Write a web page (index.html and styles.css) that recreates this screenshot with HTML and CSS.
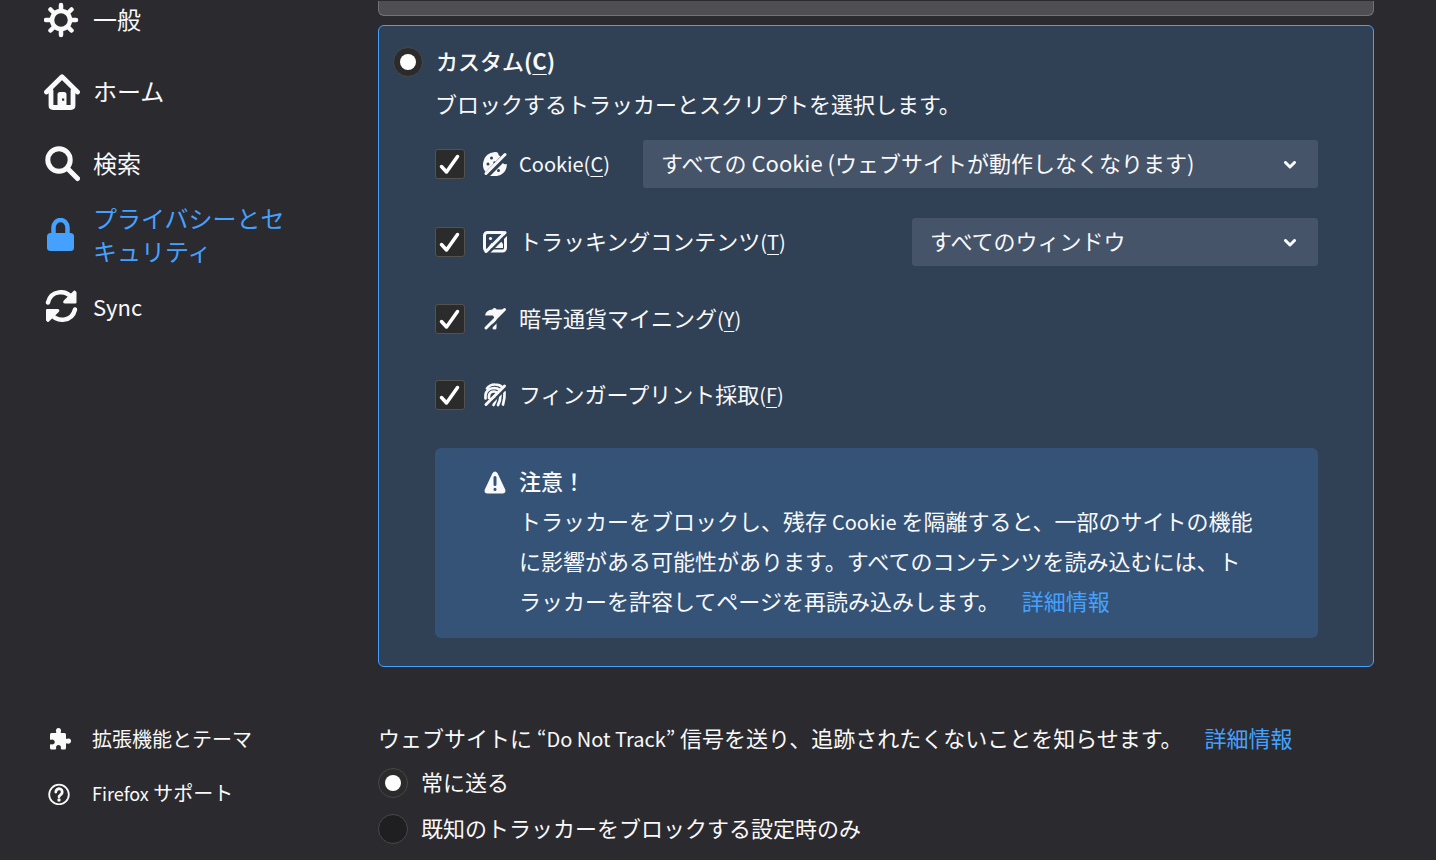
FILE: index.html
```html
<!DOCTYPE html>
<html lang="ja">
<head>
    <meta charset="UTF-8">
    <meta name="viewport" content="width=device-width, initial-scale=1.0">
    <title>設定</title>
    <link rel="stylesheet" href="styles.css">
</head>
<body>
  <div class="page">
    <aside class="sidebar">
      <nav class="categories">
        <a class="category" href="#general">
          <svg class="category-icon" viewBox="0 0 36 36" fill="none" stroke="currentColor" stroke-width="4.500" stroke-linecap="round">
            <circle cx="17" cy="18" r="9"/>
            <path d="M17 3v5M17 28v5M2 18h5M27 18h5M6.500 7.500l3.500 3.500M24 25l3.500 3.500M27.500 7.500l-3.500 3.500M10 25l-3.500 3.500"/>
          </svg>
          <span>一般</span>
        </a>
        <a class="category" href="#home">
          <svg class="category-icon" viewBox="0 0 36 36" fill="none" stroke="currentColor" stroke-width="4.800" stroke-linecap="round" stroke-linejoin="round">
            <path d="M2.500 18L18 2.800L33.500 18"/>
            <path d="M7 16.500v15q0 2 2 2h18q2 0 2-2v-15"/>
            <path d="M13.500 33V20.500q0-2.500 2.500-2.500h4q2.500 0 2.500 2.500V33z" fill="currentColor" stroke="none"/>
            <rect class="door-knob" x="18" y="24.500" width="2.200" height="2.200" stroke="none"/>
          </svg>
          <span>ホーム</span>
        </a>
        <a class="category" href="#search">
          <svg class="category-icon" viewBox="0 0 36 36" fill="none" stroke="currentColor" stroke-width="5" stroke-linecap="round">
            <circle cx="15" cy="14" r="11.200"/>
            <path d="M23.500 22.500L33.500 32.500"/>
          </svg>
          <span>検索</span>
        </a>
        <a class="category selected" href="#privacy">
          <svg class="category-icon" viewBox="0 0 36 36">
            <rect x="3" y="15" width="27" height="18" rx="3.500" fill="currentColor"/>
            <path d="M9.500 16v-6.500a7 7.500 0 0 1 14 0V16" fill="none" stroke="currentColor" stroke-width="4.500"/>
          </svg>
          <span>プライバシーとセキュリティ</span>
        </a>
        <a class="category" href="#sync">
          <svg class="category-icon" viewBox="0 0 36 36" fill="none" stroke="currentColor" stroke-width="4.500" stroke-linecap="round" stroke-linejoin="round">
            <path d="M4 12.500C7 0 22-.5 28 8"/>
            <path d="M31 19.500C28 32 13 32.500 7 24"/>
            <path d="M31.500 2.500v10h-10.500q-1.500 0-.5-1.200l10-9.800z" fill="currentColor" stroke-width="2"/>
            <path d="M3 30v-10h10.500q1.500 0 .5 1.200l-10 9.800z" fill="currentColor" stroke-width="2"/>
          </svg>
          <span class="sync-label">Sync</span>
        </a>
      </nav>

      <nav class="side-links">
        <a class="side-link" href="#addons">
          <svg class="side-icon" viewBox="0 0 24 24" fill="currentColor">
            <path d="M2 7.500q0-1.500 1.500-1.500h4q1.200 0 .7-1.300A2.600 2.600 0 1 1 12.800 4.700Q12.300 6 13.500 6h3q1.500 0 1.500 1.500v3.500q0 1.300 1.300.8a2.600 2.600 0 1 1 0 4.600q-1.300-.5-1.300.8v3.800q0 1.500-1.500 1.500h-2.700q-1.500 0-.9-1.400a2.500 2.500 0 1 0-4.800 0q.6 1.400-.9 1.400H3.500Q2 22.500 2 21v-3q0-1.200 1.300-.7a2.500 2.500 0 1 0 0-4.600Q2 13.200 2 12z"/>
          </svg>
          <span>拡張機能とテーマ</span>
        </a>
        <a class="side-link" href="#support">
          <svg class="side-icon" viewBox="0 0 24 24" fill="none" stroke="currentColor" stroke-linecap="round" stroke-linejoin="round">
            <circle cx="11" cy="13.500" r="9.800" stroke-width="1.800"/>
            <path d="M7.800 11a3.200 3.200 0 1 1 5 2.600q-1.800 1.200-1.800 2.200" stroke-width="2.800"/>
            <circle cx="11" cy="19" r="1.700" fill="currentColor" stroke="none"/>
          </svg>
          <span><span class="latin-small">Firefox</span> サポート</span>
        </a>
      </nav>
    </aside>

    <main class="content">
      <div class="option-card strict"></div>

      <section class="option-card custom">
        <div class="radio-row">
          <input type="radio" class="radio" name="blocking" id="custom" checked>
          <label class="card-title" for="custom">カスタム<b>(<u>C</u>)</b></label>
        </div>

        <div class="card-body">
          <p class="description">ブロックするトラッカーとスクリプトを選択します。</p>

          <div class="rows">
            <div class="row">
              <span class="check">
                <input type="checkbox" id="cookies" checked>
                <svg viewBox="0 0 30 30"><path d="M6.500 17.500l5 5.500L22.500 7.500"/></svg>
              </span>
              <svg class="row-icon" viewBox="0 0 24 24">
                <path d="M12 0q2.500 0 3 1 0 2.500 2.500 3.500L2.500 20Q-1 16 .3 10Q2 1 12 0z" fill="currentColor"/>
                <path d="M7 24L20 11q1 2 4 1Q23.500 20 17.500 23Q12 25 7 24z" fill="currentColor"/>
                <circle class="hole" cx="8.500" cy="6" r="1.500"/>
                <circle class="hole" cx="5" cy="12" r="1.500"/>
                <circle class="hole" cx="11.500" cy="10.500" r="1.200"/>
                <circle class="hole" cx="15.500" cy="18.500" r="1.500"/>
                <path class="slash-gap" d="M24.500 3.800L4.500 23.800"/>
                <path class="slash" d="M22 2.500L3 21.500"/>
              </svg>
              <label class="row-label" for="cookies"><span class="latin">Cookie(<u>C</u>)</span></label>
              <div class="menu wide">
                <select aria-label="Cookie">
                  <option>すべての Cookie (ウェブサイトが動作しなくなります)</option>
                </select>
                <svg class="chevron" viewBox="0 0 12 8"><path d="M1.500 1.500L6 6l4.500-4.500"/></svg>
              </div>
            </div>

            <div class="row">
              <span class="check">
                <input type="checkbox" id="tracking" checked>
                <svg viewBox="0 0 30 30"><path d="M6.500 17.500l5 5.500L22.500 7.500"/></svg>
              </span>
              <svg class="row-icon" viewBox="0 0 24 24">
                <rect x="1.500" y="2.500" width="21" height="18.500" rx="3" fill="none" stroke="currentColor" stroke-width="3"/>
                <circle cx="7.500" cy="8.500" r="1.600" fill="currentColor"/>
                <path d="M5 18l3.500-5 2.500 2 5.500-5.500 3.500 4.500v4z" fill="currentColor"/>
                <path class="slash-gap" d="M24.500 3.800L4.500 23.800"/>
                <path class="slash" d="M22 2.500L3 21.500"/>
              </svg>
              <label class="row-label" for="tracking">トラッキングコンテンツ<span class="latin">(<u>T</u>)</span></label>
              <div class="menu narrow">
                <select aria-label="トラッキングコンテンツ">
                  <option>すべてのウィンドウ</option>
                </select>
                <svg class="chevron" viewBox="0 0 12 8"><path d="M1.500 1.500L6 6l4.500-4.500"/></svg>
              </div>
            </div>

            <div class="row short">
              <span class="check">
                <input type="checkbox" id="miners" checked>
                <svg viewBox="0 0 30 30"><path d="M6.500 17.500l5 5.500L22.500 7.500"/></svg>
              </span>
              <svg class="row-icon" viewBox="0 0 24 24">
                <path d="M2 8.500Q3 3 9.500 2.500 9.500 1 11.500 1t2 1.500l7 0L12 12 10 8.500H3q-1.200 0-1-1z" fill="currentColor"/>
                <path d="M9.500 16l4-4V21q0 1.500-2 1.500T9.500 21z" fill="currentColor"/>
                <path class="slash-gap" d="M24.500 3.800L4.500 23.800"/>
                <path class="slash" d="M21.500 2.500L3 21"/>
              </svg>
              <label class="row-label" for="miners">暗号通貨マイニング<span class="latin">(<u>Y</u>)</span></label>
            </div>

            <div class="row short">
              <span class="check">
                <input type="checkbox" id="fingerprint" checked>
                <svg viewBox="0 0 30 30"><path d="M6.500 17.500l5 5.500L22.500 7.500"/></svg>
              </span>
              <svg class="row-icon" viewBox="0 0 24 24">
                <g fill="none" stroke="currentColor" stroke-width="2.700" stroke-linecap="round">
                  <path d="M4 5.500Q7 1.300 12 1.500q5 0 7.500 3"/>
                  <path d="M2.500 15.500V12q1-6.500 8.500-7 3.500 0 6 2"/>
                  <path d="M6 15v-2q.5-4.500 5-4.500 2 0 3.500 1.500"/>
                  <path d="M21.500 9q.5 6-1.500 12.500"/>
                  <path d="M17.500 12q0 5.500-2.500 10"/>
                  <path d="M13 15q-.5 4-2.500 7"/>
                </g>
                <path class="slash-gap" d="M24.500 3.800L4.500 23.800"/>
                <path class="slash" d="M21.500 3L3 21.500"/>
              </svg>
              <label class="row-label" for="fingerprint">フィンガープリント採取<span class="latin">(<u>F</u>)</span></label>
            </div>
          </div>

          <div class="warning">
            <svg class="row-icon warning-icon" viewBox="0 0 24 24">
              <path d="M9.300 2.500q2.700-4 5.400 0L22.200 18.500q1 4-2.500 4H4.300q-3.500 0-2.500-4z" fill="currentColor"/>
              <path class="mark" d="M12 6.500v7M12 18.200v.2"/>
            </svg>
            <div class="warning-text">
              <strong>注意！</strong>
              <p>トラッカーをブロックし、残存 <span class="latin">Cookie</span> を隔離すると、一部のサイトの機能に影響がある可能性があります。すべてのコンテンツを読み込むには、トラッカーを許容してページを再読み込みします。<a class="learn-more" href="#learn">詳細情報</a></p>
            </div>
          </div>
        </div>
      </section>

      <section class="dnt">
        <p>ウェブサイトに <span class="latin">“Do Not Track”</span> 信号を送り、追跡されたくないことを知らせます。<a class="learn-more" href="#dnt">詳細情報</a></p>
        <div class="radio-row">
          <input type="radio" class="radio" name="dnt" id="dnt-always" checked>
          <label for="dnt-always">常に送る</label>
        </div>
        <div class="radio-row">
          <input type="radio" class="radio" name="dnt" id="dnt-default">
          <label for="dnt-default">既知のトラッカーをブロックする設定時のみ</label>
        </div>
      </section>
    </main>
  </div>
</body>
</html>
```

FILE: styles.css
```css
*{
    box-sizing: border-box;
}

body{
    margin: 0;
    background-color: #2b2a2e;
    color: #f9f9fa;
    font-family: "Noto Sans CJK JP", sans-serif;
    font-size: 22px;
    line-height: 33px;
}

p{
    margin: 0;
}

a{
    color: inherit;
    text-decoration: none;
}

u{
    text-underline-offset: 4px;
    text-decoration-thickness: 1px;
}

label,
.category span{
    padding-bottom: 4px;
}

/* latin letters run large next to kana */
.latin{
    font-size: 20px;
    line-height: 1;
}

.latin-small{
    font-size: 18px;
    line-height: 1;
}

.page{
    display: flex;
    min-height: 100vh;
}

/* sidebar */
.sidebar{
    display: flex;
    flex-direction: column;
    justify-content: space-between;
    flex: 0 0 312px;
    height: 100vh;
    padding: 0 16px 40px 44px;
}

.categories{
    margin-top: -16px;
    font-size: 24px;
}

.category{
    display: flex;
    align-items: center;
    gap: 13px;
    height: 72px;
}

.category-icon{
    flex: none;
    width: 36px;
    height: 36px;
}

.sync-label{
    font-size: 22px;
}

.selected,
.learn-more{
    color: #45a1ff;
}

.door-knob{
    fill: #2b2a2e;
}

.side-links{
    font-size: 20px;
}

.side-link{
    display: flex;
    align-items: center;
    gap: 20px;
    height: 54px;
    padding-left: 4px;
}

.side-link > span{
    padding-bottom: 2px;
}

.side-icon{
    flex: none;
    width: 24px;
    height: 24px;
}

/* main column */
.content{
    flex: 1;
    padding: 0 62px 16px 66px;
}

.option-card{
    border: 1px solid #737277;
    border-radius: 6px;
    background-color: #4f4e52;
}

.strict{
    height: 15px;
    margin: 1px 0 9px;
    border-top: none;
    border-radius: 0 0 6px 6px;
}

.custom{
    padding: 21px 55px 28px 14px;
    border-color: #45a1ff;
    background-color: #304156;
}

.radio-row{
    display: flex;
    align-items: center;
    gap: 13px;
    height: 30px;
}

.radio{
    flex: none;
    display: grid;
    place-content: center;
    appearance: none;
    width: 30px;
    height: 30px;
    margin: 0;
    border: 1px solid #48474a;
    border-radius: 50%;
    background-color: #1f1f21;
}

.radio:checked{
    background-color: #2b2b2b;
}

.radio:checked::before{
    content: "";
    width: 16px;
    height: 16px;
    border-radius: 50%;
    background-color: #fff;
}

.card-title{
    font-weight: 500;
}

.card-body{
    padding-left: 42px;
}

.description{
    margin: 10px 0 20px;
}

.rows{
    display: grid;
    gap: 30px;
}

.row{
    display: flex;
    align-items: center;
    height: 48px;
}

.short{
    height: 46px;
}

.check{
    position: relative;
    flex: none;
    width: 30px;
    height: 30px;
    margin-right: 18px;
}

.check input{
    display: block;
    appearance: none;
    width: 30px;
    height: 30px;
    margin: 0;
    border: 1px solid #54524f;
    border-radius: 3px;
    background-color: #2b2b2b;
}

.check svg{
    position: absolute;
    inset: 0;
    fill: none;
    stroke: #fff;
    stroke-width: 3.5;
    stroke-linecap: round;
    stroke-linejoin: round;
    pointer-events: none;
}

.row-icon{
    flex: none;
    width: 24px;
    height: 24px;
    margin-right: 12px;
}

.hole{
    fill: #304156;
}

.slash-gap{
    stroke: #304156;
    stroke-width: 2.5;
}

.slash{
    stroke: currentColor;
    stroke-width: 3;
    stroke-linecap: round;
}

.menu{
    position: relative;
    flex: 0 1 auto;
    height: 48px;
    margin-left: auto;
}

.wide{
    width: 675px;
}

.narrow{
    width: 406px;
}

.menu select{
    appearance: none;
    width: 100%;
    height: 100%;
    padding: 0 40px 4px 18px;
    border: none;
    border-radius: 3px;
    background-color: #455469;
    color: inherit;
    font: inherit;
}

.chevron{
    position: absolute;
    top: 21px;
    right: 22px;
    width: 12px;
    height: 8px;
    fill: none;
    stroke: currentColor;
    stroke-width: 3;
    stroke-linecap: round;
    stroke-linejoin: round;
    pointer-events: none;
}

.warning{
    display: flex;
    margin-top: 30px;
    padding: 12px 60px 18px 48px;
    border-radius: 6px;
    background-color: #345377;
    line-height: 40px;
}

.warning-icon{
    margin-top: 11px;
}

.warning-text strong{
    display: block;
    font-weight: 500;
}

.mark{
    stroke: #345377;
    stroke-width: 3;
    stroke-linecap: round;
}

.learn-more{
    display: inline-block;
    margin-left: 22px;
}

/* do not track */
.dnt{
    display: grid;
    gap: 16px;
    margin-top: 54px;
}

.dnt p{
    margin-bottom: -2px;
}
```
